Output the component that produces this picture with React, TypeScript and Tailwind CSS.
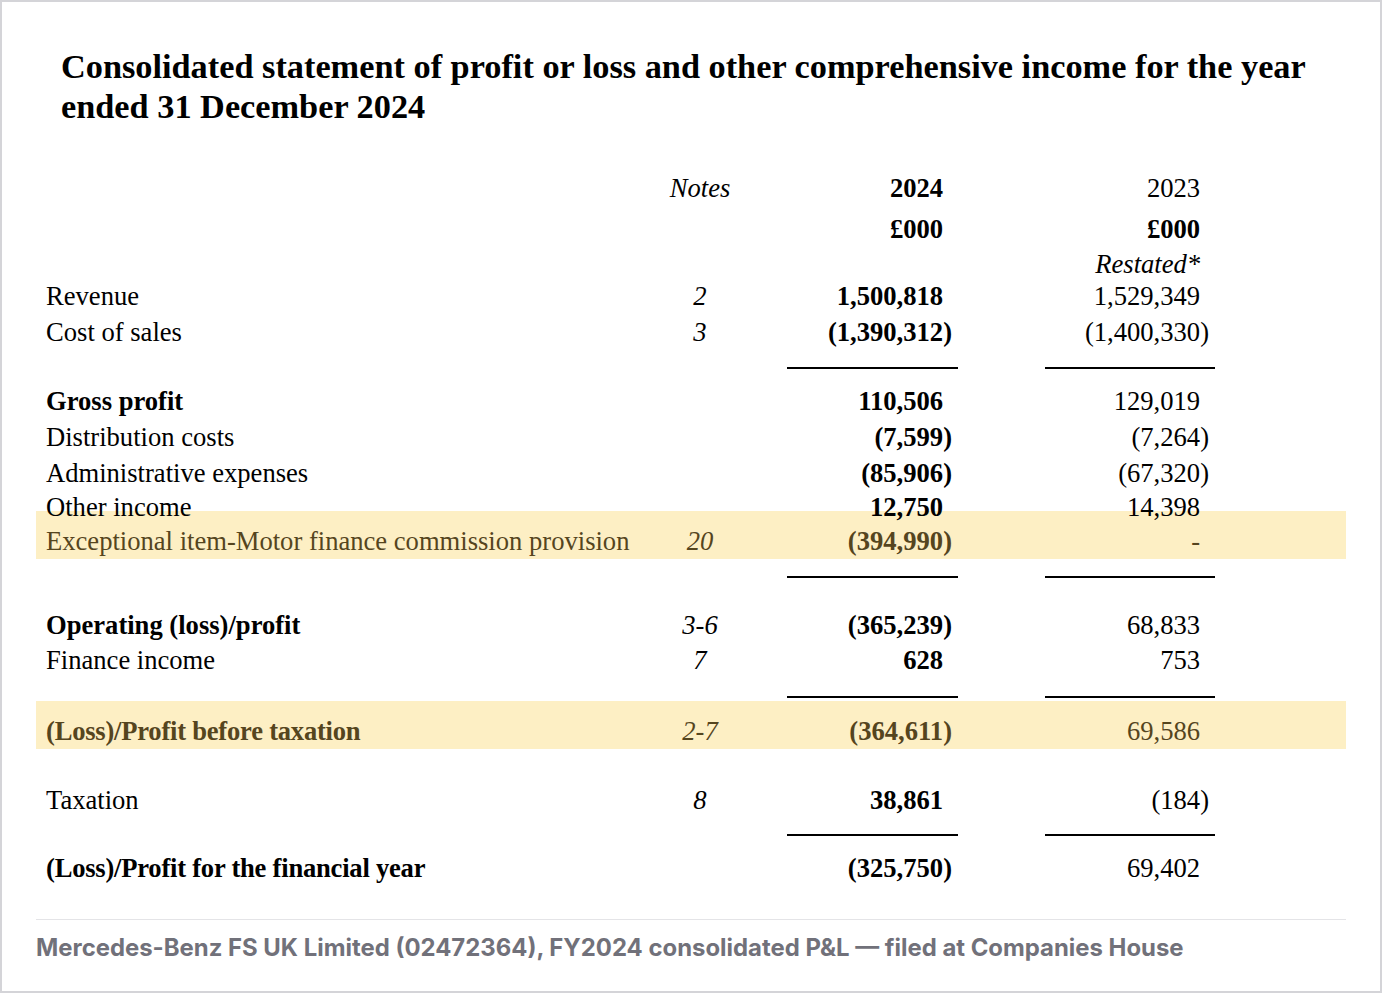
const serif = "font-['Liberation_Serif','Times_New_Roman',serif]";

type Line = {
  label: string;
  note?: string;
  cur: string;
  prev: string;
  strong?: boolean;
  tight?: boolean;
  mt: string;
};

const Amount = ({ value }: { value: string }) => (
  <>
    {value}
    {!value.endsWith(')') && <span className="invisible">)</span>}
  </>
);

const Row = ({ line, tone }: { line: Line; tone?: string }) => (
  <div className={`flex h-[36px] items-center leading-none ${line.mt} ${tone ?? 'text-black'}`}>
    <div
      className={`w-[614px] pl-[10px] ${line.strong ? 'font-bold' : ''} ${line.tight ? 'tracking-[-0.23px]' : ''}`}
    >
      {line.label}
    </div>
    <div className="w-[100px] text-center italic">{line.note}</div>
    <div className="ml-[37px] w-[171px] pr-[6px] text-right font-bold">
      <Amount value={line.cur} />
    </div>
    <div className="ml-[87px] w-[170px] pr-[6px] text-right">
      <Amount value={line.prev} />
    </div>
  </div>
);

const Rule = ({ mt }: { mt: string }) => (
  <div className={`flex h-[2px] ${mt}`}>
    <div className="ml-[751px] w-[171px] bg-black" />
    <div className="ml-[87px] w-[170px] bg-black" />
  </div>
);

const Band = ({ line, mt }: { line: Line; mt: string }) => (
  <div className={`bg-[#fdefc4] pt-[12px] ${mt}`}>
    <Row line={line} tone="text-[#55451e]" />
  </div>
);

const App = () => {
  const top: Line[] = [
    { label: 'Revenue', note: '2', cur: '1,500,818', prev: '1,529,349', mt: 'mt-[-4px]' },
    { label: 'Cost of sales', note: '3', cur: '(1,390,312)', prev: '(1,400,330)', mt: 'mt-0' },
  ];
  const middle: Line[] = [
    { label: 'Gross profit', cur: '110,506', prev: '129,019', strong: true, mt: 'mt-[14px]' },
    { label: 'Distribution costs', cur: '(7,599)', prev: '(7,264)', mt: 'mt-0' },
    { label: 'Administrative expenses', cur: '(85,906)', prev: '(67,320)', mt: 'mt-0' },
    { label: 'Other income', cur: '12,750', prev: '14,398', mt: 'mt-[-2px]' },
  ];

  return (
    <div className="h-[993px] w-[1382px] border-2 border-[#d4d4d8] bg-white px-[34px] pt-[44px]">
      <div className={`${serif} text-[26.6px] text-black`}>
        <h1 className="pl-[25px] text-[34.3px] leading-[40px] font-bold">
          Consolidated statement of profit or loss and other comprehensive income for the year
          <br />
          ended 31 December 2024
        </h1>

        <div className="mt-[44px] flex h-[36px] items-center leading-none">
          <div className="w-[614px]" />
          <div className="w-[100px] text-center italic">Notes</div>
          <div className="ml-[37px] w-[171px] pr-[6px] text-right font-bold">
            2024<span className="invisible">)</span>
          </div>
          <div className="ml-[87px] w-[170px] pr-[6px] text-right">
            2023<span className="invisible">)</span>
          </div>
        </div>
        <div className="mt-[5px] flex h-[36px] items-center font-bold leading-none">
          <div className="ml-[751px] w-[171px] pr-[6px] text-right">
            £000<span className="invisible">)</span>
          </div>
          <div className="ml-[87px] w-[170px] pr-[6px] text-right">
            £000<span className="invisible">)</span>
          </div>
        </div>
        <div className="mt-[-1px] flex h-[36px] items-center leading-none">
          <div className="ml-[1009px] w-[170px] pr-[6px] text-right italic">
            Restated*<span className="invisible">)</span>
          </div>
        </div>

        {top.map((line) => (
          <Row key={line.label} line={line} />
        ))}
        <Rule mt="mt-[17px]" />
        {middle.map((line) => (
          <Row key={line.label} line={line} />
        ))}
        <Band
          mt="mt-[-14px]"
          line={{ label: 'Exceptional item-Motor finance commission provision', note: '20', cur: '(394,990)', prev: '-', mt: 'mt-0' }}
        />
        <Rule mt="mt-[17px]" />
        <Row line={{ label: 'Operating (loss)/profit', note: '3-6', cur: '(365,239)', prev: '68,833', strong: true, mt: 'mt-[29px]' }} />
        <Row line={{ label: 'Finance income', note: '7', cur: '628', prev: '753', mt: 'mt-[-1px]' }} />
        <Rule mt="mt-[18px]" />
        <Band
          mt="mt-[3px]"
          line={{ label: '(Loss)/Profit before taxation', note: '2-7', cur: '(364,611)', prev: '69,586', strong: true, tight: true, mt: 'mt-0' }}
        />
        <Row line={{ label: 'Taxation', note: '8', cur: '38,861', prev: '(184)', mt: 'mt-[33px]' }} />
        <Rule mt="mt-[16px]" />
        <Row
          line={{ label: '(Loss)/Profit for the financial year', cur: '(325,750)', prev: '69,402', strong: true, tight: true, mt: 'mt-[14px]' }}
        />
      </div>

      <div className="mt-[33px] h-px bg-[#e4e4e7]" />
      <p className="mt-[16px] font-['Inter',sans-serif] text-[23.9px] leading-none font-bold text-[#71717a]">
        Mercedes-Benz FS UK Limited (02472364), FY2024 consolidated P&amp;L — filed at Companies House
      </p>
    </div>
  );
};

export default App;
